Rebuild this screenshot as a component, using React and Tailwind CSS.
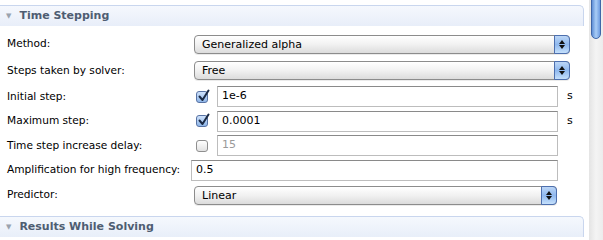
import React from 'react';

const font = { fontFamily: '"DejaVu Sans", "Liberation Sans", sans-serif' };

function SectionHeader({ title }) {
    return (
        <div className="flex h-[21px] items-center rounded-tr-[5px] border-t border-r border-[#c9d6ee] bg-gradient-to-b from-[#f5f8fd] to-[#e8eef9] pl-[6px]">
            <span className="mr-[8px] text-[7px] leading-none text-[#9aa3ae]">▼</span>
            <span className="text-[11px] font-bold text-[#4e5d72]">{title}</span>
        </div>
    );
}

function Select({ value, width }) {
    return (
        <div className={`ml-[3px] flex h-[19px] ${width} items-stretch rounded-[4px] border border-[#8c8c8c] bg-gradient-to-b from-white via-[#f1f1f1] to-[#dcdcdc] shadow-[0_1px_0_rgba(0,0,0,0.08)]`}>
            <span className="flex-1 pl-[7px] text-[11px] leading-[17px] text-black">{value}</span>
            <span className="-my-px -mr-px flex w-[16px] flex-col items-center justify-center gap-[1px] rounded-r-[4px] border border-[#4d6fae] bg-gradient-to-b from-[#bcd6f6] via-[#8fb8ee] to-[#c5e0fb]">
                <svg width="6" height="4" viewBox="0 0 6 4"><path d="M3 0 L6 4 L0 4 Z" fill="#111" /></svg>
                <svg width="6" height="4" viewBox="0 0 6 4"><path d="M0 0 L6 0 L3 4 Z" fill="#111" /></svg>
            </span>
        </div>
    );
}

function Check({ checked }) {
    return (
        <span className={`relative ml-[5px] mr-[9px] block h-[12px] w-[12px] shrink-0 rounded-[3px] border ${checked ? 'border-[#5873a4] bg-gradient-to-b from-[#cfe2fb] to-[#8fb6e8]' : 'border-[#8f8f8f] bg-gradient-to-b from-white to-[#e2e2e2]'}`}>
            {checked && (
                <svg className="absolute -top-[3px] left-[1px]" width="12" height="13" viewBox="0 0 12 13">
                    <path d="M1.5 7.5 L4.5 11 L10.5 1.5" fill="none" stroke="#1b2a44" strokeWidth="2" strokeLinecap="round" strokeLinejoin="round" />
                </svg>
            )}
        </span>
    );
}

function TextInput({ value, width, disabled }) {
    return (
        <div className={`flex h-[21px] ${width} shrink-0 items-center border border-[#bdbdbd] border-t-[#8a8a8a] bg-white pl-[4px] text-[11px] ${disabled ? 'text-[#9a9a9a]' : 'text-black'}`}>
            {value}
        </div>
    );
}

function Row({ label, height, children }) {
    return (
        <div className={`flex ${height} items-center`}>
            <span className="w-[191px] shrink-0 whitespace-nowrap pl-[7px] text-[10.6px] text-black">{label}</span>
            {children}
        </div>
    );
}

export default function App() {
    return (
        <div className="flex h-[240px] w-[603px] overflow-hidden bg-white" style={font}>
            <div className="w-[584px] pt-[5px]">
                <SectionHeader title="Time Stepping" />
                <div className="pt-[5px]">
                    <Row label="Method:" height="h-[26px]">
                        <Select value="Generalized alpha" width="w-[376px]" />
                    </Row>
                    <Row label="Steps taken by solver:" height="h-[27px]">
                        <Select value="Free" width="w-[376px]" />
                    </Row>
                    <Row label="Initial step:" height="h-[25px]">
                        <Check checked />
                        <TextInput value="1e-6" width="w-[341px]" />
                        <span className="ml-[9px] text-[11px]">s</span>
                    </Row>
                    <Row label="Maximum step:" height="h-[24px]">
                        <Check checked />
                        <TextInput value="0.0001" width="w-[341px]" />
                        <span className="ml-[9px] text-[11px]">s</span>
                    </Row>
                    <Row label="Time step increase delay:" height="h-[25px]">
                        <Check />
                        <TextInput value="15" width="w-[341px]" disabled />
                    </Row>
                    <Row label="Amplification for high frequency:" height="h-[24px]">
                        <TextInput value="0.5" width="w-[367px]" />
                    </Row>
                    <Row label="Predictor:" height="h-[26px]">
                        <Select value="Linear" width="w-[363px]" />
                    </Row>
                </div>
                <div className="mt-[8px]">
                    <SectionHeader title="Results While Solving" />
                </div>
            </div>
            <div className="w-[5px]" />
            <div className="flex w-[14px] justify-center bg-gradient-to-r from-[#e4e4e4] via-[#f4f4f4] to-[#ececec]">
                <div className="-mt-[6px] h-[45px] w-[10px] rounded-full border border-[#3f67a8] bg-gradient-to-r from-[#5f8fd6] via-[#a9cdf6] to-[#6d9be0]" />
            </div>
        </div>
    );
}
